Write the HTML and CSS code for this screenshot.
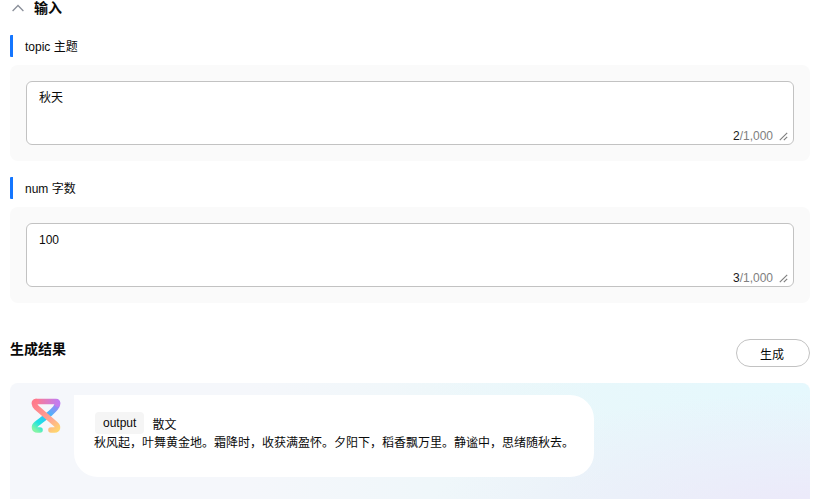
FILE: index.html
```html
<!DOCTYPE html>
<html lang="zh">
<head>
<meta charset="utf-8">
<title>输入</title>
<link rel="stylesheet" href="styles.css">
</head>
<body>
<main class="page">
  <header class="input-head">
    <svg class="chevron" width="12" height="8" viewBox="0 0 12 8"><path d="M.6 7 6 1.500 11.400 7" fill="none" stroke="#8a8f99" stroke-width="1.300"/></svg>
    <h2 class="input-title">输入</h2>
  </header>

  <section class="field">
    <div class="field-label">topic 主题</div>
    <div class="panel">
      <div class="textbox">
        <div class="textbox-value">秋天</div>
        <div class="counter"><span class="count-now">2</span>/1,000
          <svg class="grip" width="9" height="9" viewBox="0 0 9 9"><path d="M.8 8.200 8.200.8M4.800 8.200 8.200 4.800" fill="none" stroke="#808080" stroke-width="1.200"/></svg>
        </div>
      </div>
    </div>
  </section>

  <section class="field">
    <div class="field-label">num 字数</div>
    <div class="panel">
      <div class="textbox">
        <div class="textbox-value">100</div>
        <div class="counter"><span class="count-now">3</span>/1,000
          <svg class="grip" width="9" height="9" viewBox="0 0 9 9"><path d="M.8 8.200 8.200.8M4.800 8.200 8.200 4.800" fill="none" stroke="#808080" stroke-width="1.200"/></svg>
        </div>
      </div>
    </div>
  </section>

  <div class="result-head">
    <h2 class="result-title">生成结果</h2>
    <button class="generate" type="button">生成</button>
  </div>

  <section class="result-card">
    <svg class="logo" width="32" height="36" viewBox="0 0 32 36">
      <defs>
        <linearGradient id="g1" gradientUnits="userSpaceOnUse" x1="5" y1="5" x2="28" y2="33">
          <stop offset="0" stop-color="#ff7a8c"/><stop offset="0.65" stop-color="#ffa793"/><stop offset="1" stop-color="#ffd56e"/>
        </linearGradient>
        <linearGradient id="g2" gradientUnits="userSpaceOnUse" x1="27" y1="5" x2="5" y2="33">
          <stop offset="0" stop-color="#b77bf0"/><stop offset="0.5" stop-color="#2fc2ff"/><stop offset="0.78" stop-color="#1fe3e0"/><stop offset="1" stop-color="#82f5a6"/>
        </linearGradient>
        <linearGradient id="g3" gradientUnits="userSpaceOnUse" x1="5" y1="0" x2="28" y2="0">
          <stop offset="0" stop-color="#ff7a8c"/><stop offset="1" stop-color="#c27cf0"/>
        </linearGradient>
      </defs>
      <path d="M27.500 6C27.500 10 24 13 20 16.500L6.500 27C3.500 29.500 4 33 7.500 33H10" fill="none" stroke="url(#g2)" stroke-width="5.600" stroke-linecap="round"/>
      <path d="M6 4.500H26C27.500 4.500 27.500 6 27.500 7" fill="none" stroke="url(#g3)" stroke-width="5.600" stroke-linecap="round"/>
      <path d="M6 4.500C3.500 4.500 4 8 6.500 10.500L25.500 27C28.500 29.500 28 33 24.500 33H21" fill="none" stroke="url(#g1)" stroke-width="5.600" stroke-linecap="round"/>
    </svg>
    <div class="bubble">
      <div class="output-line"><span class="tag">output</span><span class="output-name">散文</span></div>
      <p class="output-text">秋风起，叶舞黄金地。霜降时，收获满盈怀。夕阳下，稻香飘万里。静谧中，思绪随秋去。</p>
    </div>
  </section>
</main>
</body>
</html>
```

FILE: styles.css
```css
* { box-sizing: border-box; }

html, body {
  margin: 0;
  height: 499px;
  overflow: hidden;
  background: #fff;
}

body {
  font-family: "Liberation Sans", "Noto Sans CJK SC", sans-serif;
  font-size: 12px;
  color: #0a0a0a;
}

.page {
  display: flex;
  flex-direction: column;
  padding: 0 12px 0 10px;
  margin-top: -2px;
}

.input-head {
  display: flex;
  align-items: center;
  height: 20px;
  padding-left: 2px;
  gap: 10px;
}

.input-title, .result-title {
  margin: 0;
  font-size: 14px;
  line-height: 20px;
  font-weight: 700;
  color: #0a0a0a;
}

.field {
  display: flex;
  flex-direction: column;
  margin-top: 17px;
}

.field + .field { margin-top: 16px; }

.field-label {
  height: 22px;
  line-height: 24px;
  border-left: 3px solid #1476ff;
  border-radius: 1px;
  padding-left: 12px;
  margin-bottom: 8px;
}

.panel {
  background: #fafafa;
  border-radius: 8px;
  padding: 16px;
}

.textbox {
  position: relative;
  height: 64px;
  background: #fff;
  border: 1px solid #c2c2c2;
  border-radius: 6px;
  padding: 7px 12px;
}

.textbox-value { line-height: 19px; }

.counter {
  position: absolute;
  right: 5px;
  bottom: 0;
  display: flex;
  align-items: center;
  line-height: 16px;
  color: #808080;
}

.count-now { color: #1a1a1a; }

.grip { margin-left: 6px; }

.result-head {
  display: flex;
  justify-content: space-between;
  align-items: flex-start;
  margin-top: 36px;
  height: 44px;
}

.generate {
  width: 74px;
  height: 28px;
  border: 1px solid #c2c2c2;
  border-radius: 14px;
  background: #fff;
  color: #0a0a0a;
  font: inherit;
  padding: 0 2px 0 0;
}

.result-card {
  display: flex;
  align-items: flex-start;
  gap: 12px;
  height: 130px;
  padding: 12px 0 0 20px;
  border-radius: 8px;
  background:
    radial-gradient(ellipse 380px 120px at 100% 100%, #ece8fa 0%, rgba(238,234,250,0) 100%),
    radial-gradient(ellipse 420px 130px at 100% 0%, #e5f8fd 0%, rgba(229,248,253,0) 100%),
    linear-gradient(90deg, #f5f7fb 30%, #eaf7f9 75%);
}

.logo { flex: none; margin-top: 2px; }

.bubble {
  width: 520px;
  height: 82px;
  background: #fff;
  border-radius: 0 24px 24px 24px;
  padding: 17px 20px;
}

.output-line {
  display: flex;
  align-items: center;
  gap: 8px;
  padding-left: 1px;
}

.tag {
  height: 22px;
  line-height: 22px;
  padding: 0 8px;
  background: #f5f5f5;
  border-radius: 4px;
}

.output-text {
  margin: 0;
  line-height: 18px;
  white-space: nowrap;
}
```
